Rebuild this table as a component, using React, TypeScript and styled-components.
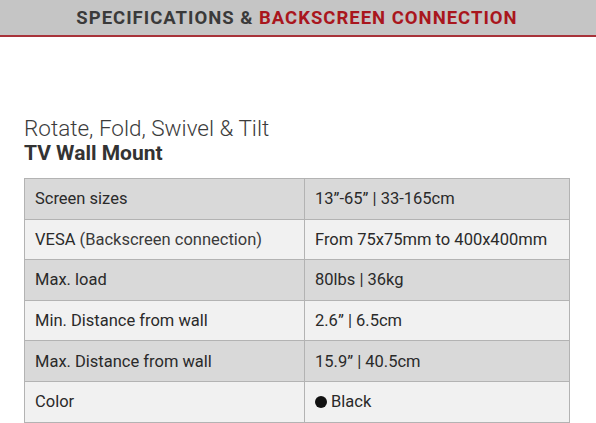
import React from "react";
import styled, { createGlobalStyle } from "styled-components";

const Global = createGlobalStyle`
  html, body { margin: 0; padding: 0; background: #ffffff; }
  body { font-family: Roboto, "Liberation Sans", sans-serif; }
`;

const Page = styled.div`
  width: 596px;
  height: 423px;
  overflow: hidden;
  background: #ffffff;
`;

const HeaderBar = styled.header`
  height: 35px;
  background: #c5c5c5;
  border-bottom: 2px solid #a8333a;
  display: flex;
  align-items: center;
  justify-content: center;
`;

const HeaderTitle = styled.h1`
  margin: 0 0 0 -2px;
  font-family: Roboto, "Liberation Sans", sans-serif;
  font-weight: 700;
  font-size: 18.5px;
  letter-spacing: 1px;
  color: #3a3a3a;
  white-space: nowrap;
`;

const Accent = styled.span`
  color: #a9161d;
`;

const Content = styled.section`
  padding: 79px 26px 0 24px;
`;

const Subtitle = styled.p`
  margin: 0;
  font-family: Roboto, "Liberation Sans", sans-serif;
  font-weight: 300;
  font-size: 22.5px;
  line-height: 25px;
  color: #3c3c3c;
`;

const ProductName = styled.h2`
  margin: 0;
  font-family: Roboto, "Liberation Sans", sans-serif;
  font-weight: 700;
  font-size: 21px;
  line-height: 24px;
  color: #333333;
`;

const SpecTable = styled.table`
  margin-top: 13px;
  width: 546px;
  border-collapse: collapse;
  border: 1px solid #b3b3b3;
  table-layout: fixed;
`;

const Row = styled.tr<{ $shade: boolean }>`
  height: 40.6px;
  background: ${(p) => (p.$shade ? "#d9d9d9" : "#f1f1f1")};
`;

const Cell = styled.td<{ $first?: boolean }>`
  border: 1px solid #b3b3b3;
  padding: 0 0 0 10px;
  width: ${(p) => (p.$first ? "269px" : "auto")};
  font-family: Roboto, "Liberation Sans", sans-serif;
  font-size: 16.5px;
  color: #2a2a2a;
  vertical-align: middle;
  white-space: nowrap;
`;

const Aside = styled.span`
  color: #3a3a3a;
`;

const Dot = styled.span`
  display: inline-block;
  width: 12px;
  height: 12px;
  border-radius: 50%;
  background: #111111;
  margin-right: 4px;
  vertical-align: -1px;
`;

type Spec = { label: React.ReactNode; value: React.ReactNode };

const specs: Spec[] = [
  { label: "Screen sizes", value: "13\u201d-65\u201d | 33-165cm" },
  {
    label: (
      <>
        VESA <Aside>(Backscreen connection)</Aside>
      </>
    ),
    value: "From 75x75mm to 400x400mm",
  },
  { label: "Max. load", value: "80lbs | 36kg" },
  { label: "Min. Distance from wall", value: "2.6\u201d | 6.5cm" },
  { label: "Max. Distance from wall", value: "15.9\u201d | 40.5cm" },
  {
    label: "Color",
    value: (
      <>
        <Dot />
        Black
      </>
    ),
  },
];

export default function App() {
  return (
    <Page>
      <Global />
      <HeaderBar>
        <HeaderTitle>
          SPECIFICATIONS &amp; <Accent>BACKSCREEN CONNECTION</Accent>
        </HeaderTitle>
      </HeaderBar>
      <Content>
        <Subtitle>Rotate, Fold, Swivel &amp; Tilt</Subtitle>
        <ProductName>TV Wall Mount</ProductName>
        <SpecTable>
          <tbody>
            {specs.map((s, i) => (
              <Row key={i} $shade={i % 2 === 0}>
                <Cell $first>{s.label}</Cell>
                <Cell>{s.value}</Cell>
              </Row>
            ))}
          </tbody>
        </SpecTable>
      </Content>
    </Page>
  );
}
